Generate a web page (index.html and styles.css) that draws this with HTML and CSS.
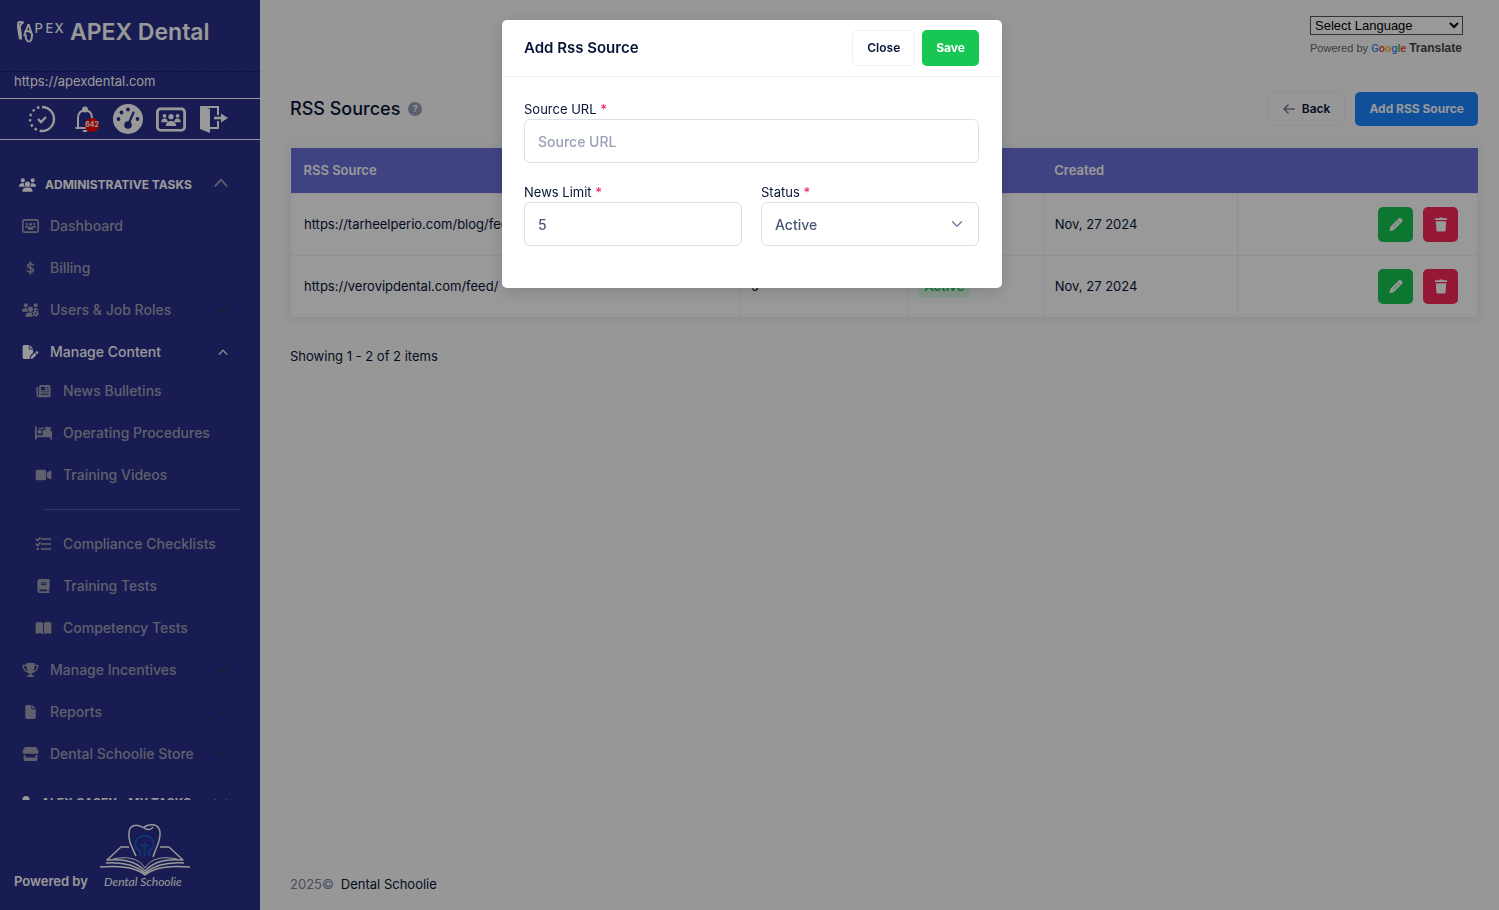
FILE: index.html
```html
<!DOCTYPE html>
<html lang="en">
<head>
  <meta charset="UTF-8">
  <meta name="viewport" content="width=device-width, initial-scale=1.0">
  <title>RSS Sources</title>
  <link rel="stylesheet" href="styles.css">
</head>
<body>
  <!-- icon sprite -->
  <svg class="sprite" aria-hidden="true">
    <symbol id="i-users" viewBox="0 0 640 512">
      <path d="M144 0a80 80 0 1 1 0 160A80 80 0 1 1 144 0zM512 0a80 80 0 1 1 0 160A80 80 0 1 1 512 0zM0 298.700C0 239.800 47.800 192 106.700 192h42.700c15.900 0 31 3.500 44.600 9.700c-1.300 7.200-1.900 14.700-1.900 22.300c0 38.200 16.800 72.500 43.300 96H21.300C9.600 320 0 310.400 0 298.700zM405.300 320c26-23.500 42.700-57.800 42.700-96c0-7.600-.7-15-1.900-22.300c13.600-6.300 28.700-9.700 44.600-9.700h42.700C592.200 192 640 239.800 640 298.700c0 11.800-9.600 21.300-21.300 21.300H405.300zM224 224a96 96 0 1 1 192 0 96 96 0 1 1 -192 0zM128 485.300C128 411.700 187.700 352 261.300 352H378.700C452.300 352 512 411.700 512 485.300c0 14.700-11.900 26.700-26.700 26.700H154.700c-14.700 0-26.700-11.900-26.700-26.700z"/>
    </symbol>
    <symbol id="i-board" viewBox="0 0 32 26">
      <rect x="1.500" y="1.500" width="29" height="23" rx="3.500" fill="none" stroke="currentColor" stroke-width="3"/>
      <circle cx="9" cy="9" r="2"/><circle cx="23" cy="9" r="2"/><circle cx="16" cy="10" r="2.800"/>
      <path d="M5.500 16c0-2.500 1.500-4 3.500-4 1.500 0 2.500.5 3 1.500.2 1 .5 1.700 1 2.500zM26.500 16c0-2.500-1.500-4-3.500-4-1.500 0-2.500.5-3 1.500-.2 1-.5 1.700-1 2.500zM10.500 20c0-3 2-5.500 5.500-5.500s5.500 2.500 5.500 5.500z"/>
    </symbol>
    <symbol id="i-dollar" viewBox="0 0 10 16">
      <path d="M5 1v14M8.500 4.800C7.500 3.600 6.300 3.200 5 3.200c-2 0-3.300.9-3.300 2.300C1.700 8.800 8.400 7 8.400 10.400c0 1.500-1.400 2.400-3.400 2.400-1.500 0-2.800-.5-3.800-1.600" fill="none" stroke="currentColor" stroke-width="1.700" stroke-linecap="round"/>
    </symbol>
    <symbol id="i-users-gear" viewBox="0 0 640 512">
      <path d="M144 0a80 80 0 1 1 0 160A80 80 0 1 1 144 0zM512 0a80 80 0 1 1 0 160A80 80 0 1 1 512 0zM0 298.700C0 239.800 47.800 192 106.700 192h42.700c15.900 0 31 3.500 44.600 9.700c-1.300 7.200-1.900 14.700-1.900 22.300c0 38.200 16.800 72.500 43.300 96H21.300C9.600 320 0 310.400 0 298.700zM448 224c0-8-.7-15-1.900-22.300c13.600-6.300 28.700-9.700 44.600-9.700h42.700c50 0 90 30 103 72l-60-14-60 10-40 30zM224 224a96 96 0 1 1 192 0 96 96 0 1 1 -192 0zM128 485.300C128 411.700 187.700 352 261.300 352H378l-10 60 40 100H154.700c-14.700 0-26.700-11.900-26.700-26.700z"/>
      <circle cx="512" cy="384" r="66" fill="none" stroke="currentColor" stroke-width="60"/>
      <circle cx="512" cy="384" r="108" fill="none" stroke="currentColor" stroke-width="44" stroke-dasharray="57 56"/>
    </symbol>
    <symbol id="i-file-pen" viewBox="0 0 576 512">
      <path d="M0 64C0 28.700 28.700 0 64 0H224V128c0 17.700 14.300 32 32 32H384V285.700l-86.800 86.800c-10.300 10.300-17.500 23.100-21 37.200l-18.700 74.900c-2.300 9.200-1.800 18.800 1.300 27.500H64c-35.300 0-64-28.700-64-64V64zm384 64H256V0L384 128zM549.800 235.700l14.400 14.400c15.600 15.600 15.600 40.900 0 56.600l-29.400 29.400-71-71 29.400-29.400c15.600-15.600 40.900-15.600 56.600 0zM311.900 417L441.100 287.800l71 71L382.900 487.900c-4.100 4.100-9.200 7-14.900 8.400l-60.100 15c-5.500 1.400-11.200-.2-15.200-4.200s-5.600-9.700-4.200-15.200l15-60.100c1.400-5.600 4.300-10.800 8.400-14.900z"/>
    </symbol>
    <symbol id="i-news" viewBox="0 0 512 512">
      <path fill-rule="evenodd" d="M96 96c0-35.300 28.700-64 64-64H448c35.300 0 64 28.700 64 64V416c0 35.300-28.700 64-64 64H80c-44.200 0-80-35.800-80-80V128c0-17.700 14.300-32 32-32s32 14.300 32 32V400c0 8.800 7.200 16 16 16s16-7.200 16-16V96zm64 24v80c0 13.300 10.700 24 24 24H296c13.300 0 24-10.700 24-24V120c0-13.300-10.700-24-24-24H184c-13.300 0-24 10.700-24 24zm208-8v32h80v-32zm0 80v32h80v-32zM160 270v36H448v-36zm0 90v36H448v-36z"/>
    </symbol>
    <symbol id="i-bed" viewBox="0 0 18 14">
      <path d="M0 0h1.800v9.500H8V4h2l2-1.500-2-.5V1h2.500l1-1 1 1H17v1.500L15.500 4C17 4.200 18 5 18 6.500V14h-1.800v-2.500H1.800V14H0z"/><circle cx="4.800" cy="5.800" r="2.200"/><path d="M4 1.500h5.500V3H4z"/>
    </symbol>
    <symbol id="i-video" viewBox="0 0 576 512">
      <path d="M0 128C0 92.700 28.700 64 64 64H320c35.300 0 64 28.700 64 64V384c0 35.300-28.700 64-64 64H64c-35.300 0-64-28.700-64-64V128zM559.100 99.800c10.400 5.600 16.900 16.400 16.900 28.200V384c0 11.800-6.500 22.600-16.900 28.200s-23 5-32.900-1.600l-96-64L416 337.100V174.900l14.200-9.500 96-64c9.800-6.500 22.400-7.200 32.900-1.600z"/>
    </symbol>
    <symbol id="i-list" viewBox="0 0 16 14">
      <path d="M6 2h9M6 7h9M6 12h9M.8 2.200l1.400 1.300L4.500.8M.8 7.200l1.400 1.300 2.300-2.700" fill="none" stroke="currentColor" stroke-width="1.600" stroke-linecap="round"/><circle cx="2.300" cy="12" r="1.300"/>
    </symbol>
    <symbol id="i-book" viewBox="0 0 448 512">
      <path fill-rule="evenodd" d="M96 0C43 0 0 43 0 96V416c0 53 43 96 96 96H416c17.700 0 32-14.300 32-32s-14.300-32-32-32V384c17.700 0 32-14.300 32-32V32c0-17.700-14.300-32-32-32H96zm0 384H352v64H96c-17.700 0-32-14.300-32-32s14.300-32 32-32zM128 128v32H336v-32zm0 64v32H336v-32z"/>
    </symbol>
    <symbol id="i-book-open" viewBox="0 0 576 512">
      <path d="M249.600 471.500c10.800 3.800 22.400-4.100 22.400-15.500V78.600c0-4.200-1.600-8.400-5-11C247.400 52 202.400 32 144 32C93.500 32 46.300 45.300 18.100 56.100C6.800 60.500 0 71.700 0 83.800V454.100c0 11.900 12.800 20.200 24.100 16.500C55.600 460.100 105.500 448 144 448c33.900 0 79 14 105.600 23.500zm76.800 0C353 462 398.100 448 432 448c38.500 0 88.400 12.100 119.900 22.600c11.300 3.800 24.100-4.600 24.100-16.500V83.800c0-12.100-6.800-23.300-18.100-27.600C529.700 45.300 482.500 32 432 32c-58.400 0-103.400 20-123 35.600c-3.300 2.600-5 6.800-5 11V456c0 11.400 11.700 19.300 22.400 15.500z"/>
    </symbol>
    <symbol id="i-trophy" viewBox="0 0 576 512">
      <path d="M400 0H176c-26.500 0-48.100 21.800-47.100 48.200c.2 5.300 .4 10.600 .7 15.800H24C10.700 64 0 74.700 0 88c0 92.600 33.500 157 78.500 200.700c44.300 43.100 98.300 64.800 138.100 75.800c23.400 6.500 39.400 26 39.400 45.600c0 20.900-17 37.900-37.900 37.900H192c-17.700 0-32 14.300-32 32s14.300 32 32 32H384c17.700 0 32-14.300 32-32s-14.300-32-32-32H357.900C337 448 320 431 320 410.100c0-19.600 15.900-39.200 39.400-45.600c39.900-11 93.900-32.700 138.200-75.800C542.500 245 576 180.600 576 88c0-13.300-10.700-24-24-24H446.400c.3-5.200 .5-10.400 .7-15.800C448.100 21.800 426.500 0 400 0zM48.900 112h84.400c9.100 90.100 29.200 150.300 51.900 190.600c-24.900-11-50.800-26.500-73.200-48.300c-32-31.100-58-76-63-142.300zM464.100 254.300c-22.400 21.800-48.300 37.300-73.200 48.300c22.700-40.300 42.800-100.500 51.900-190.600h84.400c-5.100 66.300-31.100 111.200-63 142.300z"/>
    </symbol>
    <symbol id="i-file" viewBox="0 0 384 512">
      <path d="M0 64C0 28.700 28.700 0 64 0H224V128c0 17.700 14.300 32 32 32H384V448c0 35.300-28.700 64-64 64H64c-35.300 0-64-28.700-64-64V64zm384 64H256V0L384 128z"/>
    </symbol>
    <symbol id="i-store" viewBox="0 0 16 14">
      <path fill-rule="evenodd" d="M2.500 0h11L16 4v1c0 1-.8 1.800-1.700 1.800H1.700C.8 6.800 0 6 0 5V4zM1.200 8H3v2.500h10V8h1.800v4.500c0 .8-.7 1.500-1.500 1.500H2.700c-.8 0-1.500-.7-1.500-1.500z"/>
    </symbol>
    <symbol id="i-user" viewBox="0 0 448 512">
      <path d="M224 256A128 128 0 1 0 224 0a128 128 0 1 0 0 256zm-46 48C80 304 0 384 0 482c0 17 13 30 30 30h388c17 0 30-13 30-30 0-98-80-178-178-178z"/>
    </symbol>
    <symbol id="i-up" viewBox="0 0 12 8">
      <path d="M1 7l5-5.500L11 7" fill="none" stroke="currentColor" stroke-width="1.500" stroke-linecap="round" stroke-linejoin="round"/>
    </symbol>
    <symbol id="i-down" viewBox="0 0 12 8">
      <path d="M1 1l5 5.500L11 1" fill="none" stroke="currentColor" stroke-width="1.500" stroke-linecap="round" stroke-linejoin="round"/>
    </symbol>
    <symbol id="i-pencil" viewBox="0 0 16 16">
      <path d="M10.800 1.600c.8-.8 2-.8 2.700 0l.9.900c.8.800.8 2 0 2.700L6.200 13.400c-.3.300-.6.500-1 .6L1.500 15c-.4.100-.6-.1-.5-.5l1-3.700c.1-.4.300-.7.600-1z"/>
      <path d="M9.200 3.200l3.600 3.600" stroke="#17c653" stroke-width=".7"/><path d="M5 10.800l4-4" stroke="#17c653" stroke-width=".8" stroke-linecap="round"/>
    </symbol>
    <symbol id="i-trash" viewBox="0 0 14 16">
      <path d="M5 1.200L5.400.5h3.200l.4.700h3.600c.5 0 .9.400.9.900v1.200H.5V2.100c0-.5.400-.9.900-.9zM1.500 4.500h11l-.6 9.500c0 .8-.7 1.400-1.500 1.400H3.600c-.8 0-1.500-.6-1.500-1.400z"/>
    </symbol>
  </svg>

  <div class="page">
    <aside class="sidebar">
      <div class="brand">
        <svg class="brand-logo" viewBox="0 0 47 22" aria-hidden="true">
          <path d="M7 1.500C4 .5 1 .5 1.500 4c0 6 1 8 2 14M7 1.500c-3 1-4 3-3.500 6 1 4 1 8 1 11" fill="none" stroke="#fff" stroke-width="2"/>
          <path d="M12 3L7.500 15M12 3l4 12M8 11c3-2 5-1 7 1M10 14c-2 2-1 4 2 7M15 14c1 3 0 5-2 7" fill="none" stroke="#fff" stroke-width="1.900"/>
          <text x="18" y="12">P</text><text x="29" y="12">E</text><text x="38" y="12">X</text>
        </svg>
        <span class="brand-name">APEX Dental</span>
      </div>
      <div class="site-url">https://apexdental.com</div>

      <div class="quick-bar">
        <button class="quick-button" aria-label="Tasks">
          <svg viewBox="0 0 28 28">
            <path d="M14 2a12 12 0 0 1 0 24" fill="none" stroke="currentColor" stroke-width="2.400"/>
            <path d="M14 26a12 12 0 0 1 0-24" fill="none" stroke="currentColor" stroke-width="2.400" stroke-dasharray="2.400 3"/>
            <path d="M10 14l3 3 5-5" fill="none" stroke="currentColor" stroke-width="2.400"/>
          </svg>
        </button>
        <button class="quick-button" aria-label="Notifications">
          <svg viewBox="0 0 28 28">
            <path d="M7 23V13c0-5 2.500-7.500 7-7.500s7 2.500 7 7.500v10M4.500 23h19" fill="none" stroke="currentColor" stroke-width="2"/>
            <circle cx="14" cy="4.500" r="3" fill="currentColor"/><path d="M11.500 25h5c0 3-5 3-5 0z" fill="currentColor"/>
          </svg>
          <span class="badge">642</span>
        </button>
        <button class="quick-button" aria-label="Performance">
          <svg class="gauge" viewBox="0 0 30 30">
            <circle cx="15" cy="15" r="15" fill="currentColor"/>
            <g fill="#282f8a"><circle cx="15" cy="5.500" r="1.900"/><circle cx="8.500" cy="8.500" r="1.900"/><circle cx="5.500" cy="15" r="1.900"/><circle cx="24.500" cy="15" r="1.900"/><circle cx="15" cy="21" r="3.800"/></g>
            <path d="M15.500 20L20.500 8.500" stroke="#282f8a" stroke-width="2.200" stroke-linecap="round"/>
          </svg>
        </button>
        <button class="quick-button" aria-label="Dashboard">
          <svg class="board" viewBox="0 0 32 26"><use href="#i-board"/></svg>
        </button>
        <button class="quick-button" aria-label="Log out">
          <svg viewBox="0 0 28 28">
            <path d="M0 1l10 3v24L0 24z" fill="currentColor"/>
            <path d="M1 2h17v8M18 16v7h-8" fill="none" stroke="currentColor" stroke-width="2"/>
            <path d="M14 13h8" stroke="currentColor" stroke-width="2.600"/><path d="M21 8.500l7 4.500-7 4.500z" fill="currentColor"/>
          </svg>
        </button>
      </div>

      <nav class="menu">
        <div class="menu-heading">
          <svg class="icon"><use href="#i-users"/></svg>
          <span>Administrative Tasks</span>
          <svg class="toggle"><use href="#i-up"/></svg>
        </div>
        <ul class="menu-list">
          <li><a class="menu-link" href="#"><svg class="icon"><use href="#i-board"/></svg><span>Dashboard</span></a></li>
          <li><a class="menu-link" href="#"><svg class="icon"><use href="#i-dollar"/></svg><span>Billing</span></a></li>
          <li><a class="menu-link" href="#"><svg class="icon"><use href="#i-users-gear"/></svg><span>Users &amp; Job Roles</span><svg class="arrow"><use href="#i-down"/></svg></a></li>
          <li>
            <a class="menu-link active" href="#"><svg class="icon"><use href="#i-file-pen"/></svg><span>Manage Content</span><svg class="arrow"><use href="#i-up"/></svg></a>
            <ul class="submenu">
              <li><a class="menu-link" href="#"><svg class="icon"><use href="#i-news"/></svg><span>News Bulletins</span></a></li>
              <li><a class="menu-link" href="#"><svg class="icon"><use href="#i-bed"/></svg><span>Operating Procedures</span></a></li>
              <li><a class="menu-link" href="#"><svg class="icon"><use href="#i-video"/></svg><span>Training Videos</span></a></li>
            </ul>
            <hr class="menu-divider">
            <ul class="submenu">
              <li><a class="menu-link" href="#"><svg class="icon"><use href="#i-list"/></svg><span>Compliance Checklists</span></a></li>
              <li><a class="menu-link" href="#"><svg class="icon"><use href="#i-book"/></svg><span>Training Tests</span></a></li>
              <li><a class="menu-link" href="#"><svg class="icon"><use href="#i-book-open"/></svg><span>Competency Tests</span></a></li>
            </ul>
          </li>
          <li><a class="menu-link" href="#"><svg class="icon"><use href="#i-trophy"/></svg><span>Manage Incentives</span><svg class="arrow"><use href="#i-down"/></svg></a></li>
          <li><a class="menu-link" href="#"><svg class="icon"><use href="#i-file"/></svg><span>Reports</span><svg class="arrow"><use href="#i-down"/></svg></a></li>
          <li><a class="menu-link" href="#"><svg class="icon"><use href="#i-store"/></svg><span>Dental Schoolie Store</span><svg class="arrow"><use href="#i-down"/></svg></a></li>
        </ul>
        <div class="menu-heading personal">
          <svg class="icon"><use href="#i-user"/></svg>
          <span>Alex Casey - My Tasks</span>
          <svg class="toggle"><use href="#i-down"/></svg>
        </div>
      </nav>

      <div class="powered">
        <span>Powered by</span>
        <svg class="schoolie-logo" viewBox="0 0 94 68" aria-hidden="true">
          <g fill="none" stroke="#fff" stroke-width="1.500" stroke-linejoin="round">
            <path d="M38 33C34 24 30 18 31 9c1-8 9-8 15-4 4 3 8 1 9-1M46 4c7-4 15-3 16 5 1 9-4 15-7 25"/>
            <path d="M31 24h-8L9 37c14-1 28 0 38 11 10-11 24-12 38-11L71 24h-9"/>
            <path d="M8 40c14-1 28 1 39 10 11-9 25-11 39-10M2 44c17-1 34-1 45 8 11-9 28-9 45-8" />
            <path d="M15 36c14-3 26-1 32 9 6-10 18-12 32-9" stroke-width="1"/>
          </g>
          <g fill="none" stroke="#1b55c4" stroke-width="2">
            <path d="M42 33v-5c-4-2-6-6-4-10 3-7 14-7 17 0 2 4 0 8-4 10v5M46.500 33V19M42 22l4.500 2 4.500-2"/>
          </g>
          <text x="6" y="63">Dental Schoolie</text>
        </svg>
      </div>
    </aside>

    <main class="content">
      <div class="translate">
        <select class="language" aria-label="Language">
          <option>Select Language</option>
        </select>
        <div class="translate-note">Powered by <span class="google"><span class="g-blue">G</span><span class="g-red">o</span><span class="g-yellow">o</span><span class="g-blue">g</span><span class="g-green">l</span><span class="g-red">e</span></span> <a href="#">Translate</a></div>
      </div>

      <div class="toolbar">
        <h1 class="page-title">RSS Sources</h1>
        <span class="help">?</span>
        <div class="toolbar-actions">
          <button class="btn btn-light">
            <svg class="back-arrow" viewBox="0 0 12 10"><path d="M11.500 5H1M5 1L1 5l4 4" fill="none" stroke="currentColor" stroke-width="1.600" stroke-linecap="round" stroke-linejoin="round"/></svg>
            Back
          </button>
          <button class="btn btn-primary">Add RSS Source</button>
        </div>
      </div>

      <table class="sources">
        <colgroup>
          <col class="col-source"><col class="col-limit"><col class="col-status"><col class="col-created"><col class="col-actions">
        </colgroup>
        <thead>
          <tr><th>RSS Source</th><th>News Limit</th><th>Status</th><th>Created</th><th></th></tr>
        </thead>
        <tbody>
          <tr>
            <td>https://tarheelperio.com/blog/feed/</td><td>5</td><td><span class="status">Active</span></td><td>Nov, 27 2024</td>
            <td><div class="row-actions">
              <button class="icon-button edit" aria-label="Edit"><svg><use href="#i-pencil"/></svg></button>
              <button class="icon-button delete" aria-label="Delete"><svg><use href="#i-trash"/></svg></button>
            </div></td>
          </tr>
          <tr>
            <td>https://verovipdental.com/feed/</td><td>5</td><td><span class="status">Active</span></td><td>Nov, 27 2024</td>
            <td><div class="row-actions">
              <button class="icon-button edit" aria-label="Edit"><svg><use href="#i-pencil"/></svg></button>
              <button class="icon-button delete" aria-label="Delete"><svg><use href="#i-trash"/></svg></button>
            </div></td>
          </tr>
        </tbody>
      </table>
      <div class="summary">Showing 1 - 2 of 2 items</div>

      <footer class="footer"><span>2025©</span><a href="#">Dental Schoolie</a></footer>
    </main>
  </div>

  <div class="overlay">
    <form class="modal" role="dialog" aria-labelledby="modal-title">
      <div class="modal-header">
        <h2 id="modal-title">Add Rss Source</h2>
        <button type="button" class="btn btn-light">Close</button>
        <button type="submit" class="btn btn-success">Save</button>
      </div>
      <div class="modal-body">
        <div class="field wide">
          <label for="source-url">Source URL <span class="required">*</span></label>
          <input class="control" id="source-url" type="text" placeholder="Source URL">
        </div>
        <div class="field">
          <label for="news-limit">News Limit <span class="required">*</span></label>
          <input class="control" id="news-limit" type="text" value="5">
        </div>
        <div class="field">
          <label for="status">Status <span class="required">*</span></label>
          <select class="control" id="status">
            <option>Active</option>
            <option>Inactive</option>
          </select>
        </div>
      </div>
    </form>
  </div>
</body>
</html>
```
FILE: styles.css
```css
:root {
  --sidebar: #282f8a;
  --menu-text: #a0a0b4;
  --text: #071437;
  --muted: #99a1b7;
  --border: #f1f1f4;
  --primary: #1b84ff;
  --success: #17c653;
  --danger: #f8285a;
}

* {
  margin: 0;
  padding: 0;
  box-sizing: border-box;
}

body {
  background: #fcfcfc;
  color: var(--text);
  font-family: Inter, "Liberation Sans", sans-serif;
  font-size: 13px;
  line-height: 20px;
}

a {
  color: inherit;
  text-decoration: none;
}

ul {
  list-style: none;
}

button {
  font: inherit;
  border: none;
  cursor: pointer;
}

svg {
  fill: currentColor;
  flex-shrink: 0;
}

.sprite {
  position: absolute;
  width: 0;
  height: 0;
}

.page {
  display: flex;
  min-height: 100vh;
}

/* Sidebar */
.sidebar {
  width: 260px;
  height: 100vh;
  flex-shrink: 0;
  display: flex;
  flex-direction: column;
  background: var(--sidebar);
  color: #fff;
}

.brand {
  height: 72px;
  padding: 0 16px 8px;
  display: flex;
  align-items: center;
  gap: 6px;
  flex-shrink: 0;
  border-bottom: 1px dashed #14184f;
}

.brand-logo {
  width: 48px;
  height: 22px;
}

.brand-logo text {
  font-size: 13px;
  font-weight: 500;
}

.brand-name {
  font-size: 23px;
  font-weight: 600;
}

.site-url {
  padding: 0 14px 7px;
  line-height: 19px;
}

.quick-bar {
  height: 42px;
  padding: 0 31px 0 27px;
  display: flex;
  align-items: center;
  justify-content: space-between;
  flex-shrink: 0;
  border-top: 1px solid #fff;
  border-bottom: 1px solid #fff;
}

.quick-button {
  position: relative;
  display: flex;
  align-items: center;
  justify-content: center;
  width: 30px;
  background: none;
  color: #fff;
}

.quick-button svg {
  width: 28px;
  height: 28px;
}

.quick-button .gauge {
  width: 30px;
  height: 30px;
}

.quick-button .board {
  width: 30px;
  height: 25px;
}

.badge {
  position: absolute;
  right: 1px;
  bottom: 1px;
  width: 14px;
  height: 14px;
  display: flex;
  align-items: center;
  justify-content: center;
  border-radius: 50%;
  background: #f00;
  font-size: 7px;
  font-weight: 700;
}

.menu {
  flex: 1;
  min-height: 0;
  padding: 26px 0;
  overflow: hidden auto;
  scrollbar-width: none;
}

.menu-heading {
  height: 38px;
  padding: 0 32px 0 19px;
  display: flex;
  align-items: center;
  gap: 9px;
  font-size: 12px;
  font-weight: 700;
  text-transform: uppercase;
}

.menu-heading .icon {
  width: 17px;
  height: 14px;
}

.menu-heading.personal {
  margin-top: 11px;
  gap: 8px;
}

.menu-heading.personal .icon {
  width: 14px;
}

.toggle {
  width: 14px;
  height: 9px;
  margin-left: auto;
  margin-bottom: 6px;
  color: var(--menu-text);
}

.menu-heading.personal .toggle {
  margin-bottom: 0;
}

.menu-list,
.submenu {
  display: flex;
  flex-direction: column;
  gap: 4px;
}

.menu-list {
  padding-top: 3px;
}

.submenu {
  padding: 1px 0 0 13px;
}

.menu-link {
  height: 38px;
  padding: 0 32px 0 22px;
  display: flex;
  align-items: center;
  gap: 11px;
  color: var(--menu-text);
  font-size: 14px;
  font-weight: 500;
}

.menu-link.active {
  color: #fff;
}

.menu-link .icon {
  width: 17px;
  height: 14px;
}

.arrow {
  width: 10px;
  height: 6px;
  margin-left: auto;
  color: #363843;
}

.active .arrow {
  color: #fff;
}

.menu-divider {
  margin: 15px 20px 14px 43px;
  border: none;
  border-top: 1px solid #555b9e;
}

.powered {
  height: 110px;
  padding: 0 14px 19px;
  display: flex;
  align-items: flex-end;
  gap: 10px;
  flex-shrink: 0;
  font-size: 13px;
  font-weight: 600;
}

.schoolie-logo {
  width: 94px;
  height: 68px;
}

.schoolie-logo text {
  font-family: Lato, sans-serif;
  font-size: 12px;
  font-style: italic;
  font-weight: 400;
}

/* Content */
.content {
  flex: 1;
  min-width: 0;
  padding: 16px 21px 16px 30px;
  display: flex;
  flex-direction: column;
}

.translate {
  align-self: flex-end;
  width: 153px;
  margin-right: 15px;
  color: #666;
  font-family: "Liberation Sans", Arial, sans-serif;
}

.language {
  display: block;
  width: 100%;
  height: 19px;
  background: #fff;
  border: 1px solid #555;
  font-family: "Liberation Sans", Arial, sans-serif;
  font-size: 13px;
}

.translate-note {
  height: 57px;
  padding-top: 3px;
  font-size: 11px;
  white-space: nowrap;
}

.translate-note a {
  color: #444;
  font-size: 12px;
  font-weight: 700;
}

.google {
  font-family: Roboto, sans-serif;
  font-weight: 500;
}

.g-blue { color: #4285f4; }
.g-red { color: #ea4335; }
.g-yellow { color: #fbbc05; }
.g-green { color: #34a853; }

.toolbar {
  display: flex;
  align-items: center;
  gap: 8px;
  margin-bottom: 22px;
}

.page-title {
  font-size: 18px;
  font-weight: 500;
}

.help {
  width: 14px;
  height: 14px;
  border-radius: 50%;
  background: var(--muted);
  color: #fcfcfc;
  font-size: 9px;
  font-weight: 700;
  line-height: 14px;
  text-align: center;
}

.toolbar-actions {
  display: flex;
  gap: 10px;
  margin-left: auto;
}

.btn {
  height: 36px;
  padding: 0 14px;
  display: flex;
  align-items: center;
  gap: 7px;
  border-radius: 5px;
  font-size: 12px;
  font-weight: 600;
}

.toolbar-actions .btn {
  height: 34px;
}

.btn-light {
  border: 1px solid var(--border);
  background: transparent;
  color: var(--text);
}

.btn-primary {
  background: var(--primary);
  color: #fff;
  font-weight: 700;
}

.btn-success {
  background: var(--success);
  color: #fff;
  font-weight: 700;
}

.back-arrow {
  width: 12px;
  height: 10px;
  color: #78829d;
}

.sources {
  width: 100%;
  table-layout: fixed;
  border-collapse: collapse;
  background: #fff;
  box-shadow: 0 0 8px 4px rgba(0, 0, 0, 0.04);
}

.col-source { width: 37.9%; }
.col-limit { width: 14.1%; }
.col-status { width: 11.5%; }
.col-created { width: 16.3%; }
.col-actions { width: 20.2%; }

.sources th {
  height: 45px;
  padding: 0 10px;
  background: #6c70d9;
  color: #fff;
  font-weight: 600;
  text-align: left;
}

.sources td {
  height: 62px;
  padding: 0 10px;
  border: 1px solid var(--border);
}

.sources th:first-child,
.sources td:first-child {
  padding-left: 13px;
}

.status {
  padding: 4px 6px;
  border-radius: 4px;
  background: #dfffea;
  color: var(--success);
  font-weight: 600;
}

.row-actions {
  display: flex;
  justify-content: flex-end;
  gap: 10px;
  padding-right: 9px;
}

.icon-button {
  width: 35px;
  height: 35px;
  display: flex;
  align-items: center;
  justify-content: center;
  border-radius: 5px;
  color: #fff;
}

.icon-button svg {
  width: 16px;
  height: 15px;
}

.edit {
  background: var(--success);
}

.delete {
  background: var(--danger);
}

.summary {
  padding-top: 28px;
}

.footer {
  display: flex;
  gap: 7px;
  margin-top: auto;
}

.footer span {
  color: #78829d;
}

/* Modal */
.overlay {
  position: fixed;
  inset: 0;
  padding: 20px 0 20px 5px;
  background: rgba(0, 0, 0, 0.4);
  overflow: auto;
}

.modal {
  max-width: 500px;
  margin: 0 auto;
  border-radius: 5px;
  background: #fff;
  box-shadow: 0 4px 16px rgba(0, 0, 0, 0.15);
}

.modal-header {
  height: 57px;
  padding: 0 23px 0 22px;
  display: flex;
  align-items: center;
  gap: 7px;
  border-bottom: 1px solid var(--border);
}

.modal-header h2 {
  margin-right: auto;
  font-size: 15px;
  font-weight: 600;
}

.modal-body {
  padding: 23px 23px 42px 22px;
  display: grid;
  grid-template-columns: 1fr 1fr;
  gap: 20px 19px;
}

.field {
  display: flex;
  flex-direction: column;
}

.wide {
  grid-column: span 2;
}

.field label {
  line-height: 19px;
}

.required {
  color: var(--danger);
  font-weight: 500;
}

.control {
  width: 100%;
  height: 44px;
  padding: 0 13px;
  border: 1px solid #dbdfe9;
  border-radius: 6px;
  background: #fff;
  color: #4b5675;
  font: 500 14px Inter, "Liberation Sans", sans-serif;
}

.control::placeholder {
  color: var(--muted);
}

select.control {
  appearance: none;
  background: #fff url("data:image/svg+xml,%3Csvg xmlns='http://www.w3.org/2000/svg' viewBox='0 0 16 16'%3E%3Cpath fill='none' stroke='%2378829D' stroke-width='2' stroke-linecap='round' stroke-linejoin='round' d='M2 5l6 6 6-6'/%3E%3C/svg%3E") no-repeat right 15px center / 12px 12px;
}
```
